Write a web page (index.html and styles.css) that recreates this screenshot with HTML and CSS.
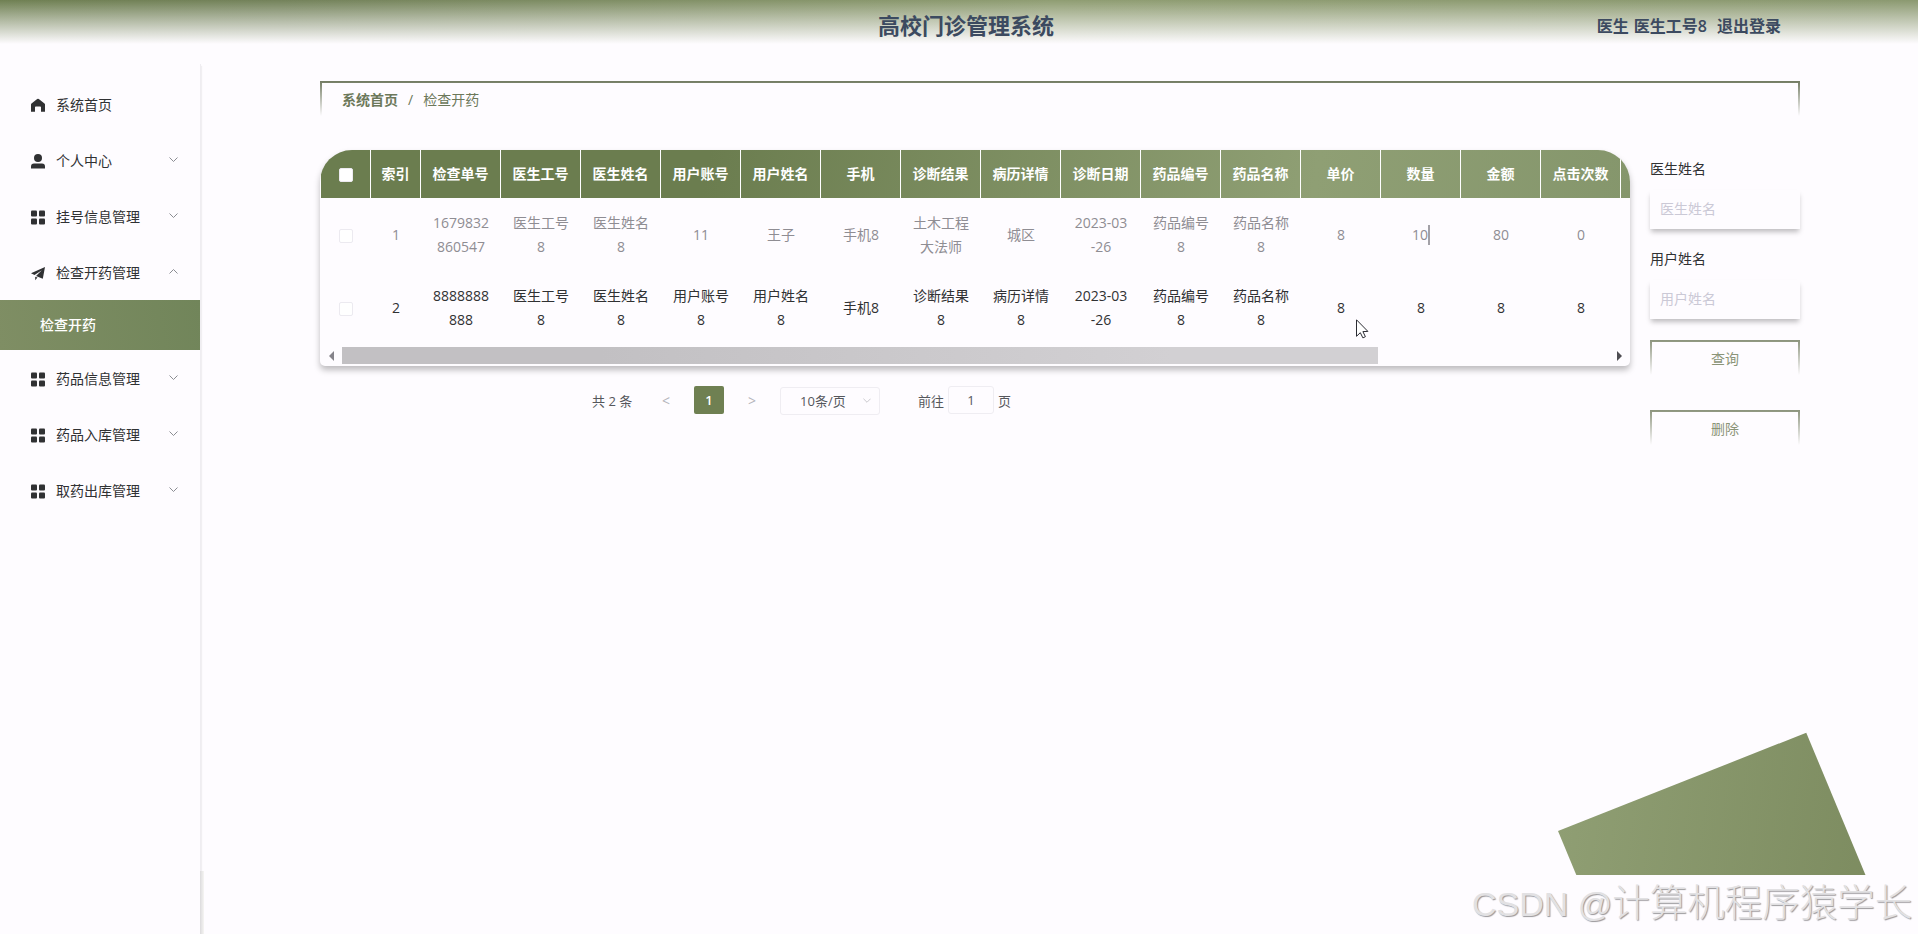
FILE: index.html
```html
<!DOCTYPE html>
<html lang="zh-CN">
<head>
    <meta charset="UTF-8">
    <meta name="viewport" content="width=device-width, initial-scale=1.0">
    <title>高校门诊管理系统</title>
    <link rel="stylesheet" href="styles.css">
</head>
<body>
    <svg class="symbols">
        <symbol id="icon-home" viewBox="0 0 14 14"><path d="M7 .2Q7.4.2 7.8.5L13.5 5q.5.5.5 1v7.2h-4V8.8Q10 8 9.2 8H4.8Q4 8 4 8.8v4.4H0V6q0-.6.5-1L6.200.5Q6.600.2 7 .2z"/></symbol>
        <symbol id="icon-user" viewBox="0 0 14 15"><circle cx="7" cy="4" r="4"/><path d="M0 14.600V12.500Q0 9.500 3 9.500h8q3 0 3 3v2.100z"/></symbol>
        <symbol id="icon-menu" viewBox="0 0 14 14"><rect width="6" height="6" rx="1"/><rect x="8" width="6" height="6" rx="1"/><rect y="8" width="6" height="6" rx="1"/><rect x="8" y="8" width="6" height="6" rx="1"/></symbol>
        <symbol id="icon-plane" viewBox="0 0 14 14"><path d="M14 .5L0 6.800l3.500 1.800L10.800 3.700 5 9.500l6.800 2.700zM4.200 10.200v3.500L6.500 11z"/></symbol>
        <symbol id="icon-down" viewBox="0 0 9 5"><path d="M.5.5l4 4 4-4" fill="none" stroke="#8b8d92"/></symbol>
    </svg>

    <header class="header">
        <h1 class="title">高校门诊管理系统</h1>
        <div class="user"><span>医生 医生工号8</span><span class="logout">退出登录</span></div>
    </header>

    <div class="container">
        <aside class="sidebar">
            <ul class="menu">
                <li class="menu-item"><svg class="icon"><use href="#icon-home"/></svg><span>系统首页</span></li>
                <li class="menu-item"><svg class="icon"><use href="#icon-user"/></svg><span>个人中心</span><svg class="arrow"><use href="#icon-down"/></svg></li>
                <li class="menu-item"><svg class="icon"><use href="#icon-menu"/></svg><span>挂号信息管理</span><svg class="arrow"><use href="#icon-down"/></svg></li>
                <li class="menu-item"><svg class="icon"><use href="#icon-plane"/></svg><span>检查开药管理</span><svg class="arrow arrow-up"><use href="#icon-down"/></svg></li>
                <li class="sub-item">检查开药</li>
                <li class="menu-item"><svg class="icon"><use href="#icon-menu"/></svg><span>药品信息管理</span><svg class="arrow"><use href="#icon-down"/></svg></li>
                <li class="menu-item"><svg class="icon"><use href="#icon-menu"/></svg><span>药品入库管理</span><svg class="arrow"><use href="#icon-down"/></svg></li>
                <li class="menu-item"><svg class="icon"><use href="#icon-menu"/></svg><span>取药出库管理</span><svg class="arrow"><use href="#icon-down"/></svg></li>
            </ul>
        </aside>

        <main class="main">
            <nav class="breadcrumb fade-border"><b>系统首页</b><span class="slash">/</span><span>检查开药</span></nav>

            <div class="content">
                <section class="list">
                    <div class="table-box">
                        <table class="table">
                            <colgroup>
                                <col class="col-small"><col class="col-small">
                                <col><col><col><col><col><col><col><col><col><col><col><col><col><col><col><col>
                            </colgroup>
                            <thead>
                                <tr>
                                    <th><span class="checkbox"></span></th>
                                    <th>索引</th>
                                    <th>检查单号</th>
                                    <th>医生工号</th>
                                    <th>医生姓名</th>
                                    <th>用户账号</th>
                                    <th>用户姓名</th>
                                    <th>手机</th>
                                    <th>诊断结果</th>
                                    <th>病历详情</th>
                                    <th>诊断日期</th>
                                    <th>药品编号</th>
                                    <th>药品名称</th>
                                    <th>单价</th>
                                    <th>数量</th>
                                    <th>金额</th>
                                    <th>点击次数</th>
                                    <th></th>
                                </tr>
                            </thead>
                            <tbody>
                                <tr class="hover">
                                    <td><span class="checkbox"></span></td>
                                    <td>1</td>
                                    <td>1679832<br>860547</td>
                                    <td>医生工号8</td>
                                    <td>医生姓名8</td>
                                    <td>11</td>
                                    <td>王子</td>
                                    <td>手机8</td>
                                    <td>土木工程大法师</td>
                                    <td>城区</td>
                                    <td>2023-03<br>-26</td>
                                    <td>药品编号8</td>
                                    <td>药品名称8</td>
                                    <td>8</td>
                                    <td><span class="caret">10</span></td>
                                    <td>80</td>
                                    <td>0</td>
                                    <td></td>
                                </tr>
                                <tr>
                                    <td><span class="checkbox"></span></td>
                                    <td>2</td>
                                    <td>8888888<br>888</td>
                                    <td>医生工号8</td>
                                    <td>医生姓名8</td>
                                    <td>用户账号8</td>
                                    <td>用户姓名8</td>
                                    <td>手机8</td>
                                    <td>诊断结果8</td>
                                    <td>病历详情8</td>
                                    <td>2023-03<br>-26</td>
                                    <td>药品编号8</td>
                                    <td>药品名称8</td>
                                    <td>8</td>
                                    <td>8</td>
                                    <td>8</td>
                                    <td>8</td>
                                    <td></td>
                                </tr>
                            </tbody>
                        </table>
                        <div class="scrollbar">
                            <span class="scroll-left"></span>
                            <span class="scroll-thumb"></span>
                            <span class="scroll-right"></span>
                        </div>
                    </div>

                    <div class="pagination">
                        <span class="total">共 2 条</span>
                        <span class="page-btn prev">&lt;</span>
                        <span class="page-num">1</span>
                        <span class="page-btn next">&gt;</span>
                        <span class="page-size">10条/页<svg class="select-arrow"><use href="#icon-down"/></svg></span>
                        <span>前往</span>
                        <span class="page-input">1</span>
                        <span>页</span>
                    </div>
                </section>

                <form class="search">
                    <label class="label">医生姓名</label>
                    <input class="input" type="text" placeholder="医生姓名">
                    <label class="label">用户姓名</label>
                    <input class="input" type="text" placeholder="用户姓名">
                    <button class="btn fade-border" type="button">查询</button>
                    <button class="btn fade-border" type="button">删除</button>
                </form>
            </div>
        </main>
    </div>

    <div class="corner"><div class="corner-block"></div></div>
    <svg class="cursor" viewBox="0 0 13 20"><path d="M.5.8v16.500l3.800-3.600 2.600 5.200 2.500-1.200-2.500-5.100 5-.2z" fill="#fff" stroke="#2b2b33"/></svg>
    <div class="watermark"><span class="latin">CSDN @</span>计算机程序猿学长</div>
</body>
</html>
```
FILE: styles.css
```css
* {
    margin: 0;
    padding: 0;
    box-sizing: border-box;
}

body {
    height: 934px;
    overflow: hidden;
    background: #fefcff;
    color: #303133;
    font-family: "Open Sans", "Noto Sans CJK SC", sans-serif;
    font-size: 14px;
    font-weight: 400;
}

.symbols {
    display: none;
}

.header {
    display: grid;
    grid-template-columns: 1fr auto 1fr;
    align-items: center;
    height: 64px;
    padding: 0 137px 14px 151px;
    background: linear-gradient(to bottom, transparent, #fefcff 44px), linear-gradient(80deg, #6f8052, #73825a 15%, #8f9d72 55%, #8b9970);
    color: #3c4a60;
}

.title {
    grid-column: 2;
    font-size: 22px;
    line-height: 50px;
}

.user {
    display: flex;
    justify-content: flex-end;
    gap: 10px;
    font-size: 16px;
    font-weight: 600;
    word-spacing: 1px;
}

.container {
    display: flex;
    height: 870px;
}

.sidebar {
    position: relative;
    width: 201px;
    padding-top: 13px;
    border-right: 1px solid #efedf1;
    box-shadow: 1px 2px 1px rgba(0, 0, 0, 0.05);
}

.sidebar::after {
    content: "";
    position: absolute;
    right: -4px;
    bottom: 0;
    width: 4px;
    height: 63px;
    background: linear-gradient(to right, #dcdbdd, #f6f5f3);
}

.menu {
    list-style: none;
}

.menu-item {
    display: flex;
    align-items: center;
    height: 56px;
    padding: 0 22px 0 31px;
}

.menu-item span {
    margin-top: -2px;
}

.icon {
    width: 14px;
    height: 15px;
    margin-right: 11px;
    fill: #303133;
}

.arrow {
    width: 9px;
    height: 5px;
    margin: 0 0 3px auto;
}

.arrow-up {
    transform: rotate(180deg);
}

.sub-item {
    height: 50px;
    margin: -1px 0 1px;
    padding-left: 40px;
    background: linear-gradient(80deg, #7f8e64, #71855a);
    color: #fff;
    font-weight: 500;
    line-height: 50px;
}

.main {
    width: 1480px;
    margin: 17px 0 0 119px;
}

.fade-border {
    border: 2px solid;
    border-bottom: 0;
    border-image: linear-gradient(to bottom, #737c63, transparent) 2 2 0 2;
}

.breadcrumb {
    display: flex;
    height: 35px;
    padding-left: 20px;
    color: #6c785a;
    line-height: 34px;
}

.slash {
    margin: 0 10px;
}

.content {
    display: flex;
    align-items: flex-start;
    gap: 20px;
    margin-top: 34px;
}

.list {
    width: 1310px;
}

.table-box {
    overflow: hidden;
    height: 216px;
    padding-left: 1px;
    border-radius: 32px 32px 5px 5px;
    box-shadow: 0 4px 6px rgba(0, 0, 0, 0.26);
}

.table {
    width: 1380px;
    table-layout: fixed;
    border-spacing: 0;
}

.table col {
    width: 80px;
}

.table .col-small {
    width: 50px;
}

.table thead {
    background: linear-gradient(100deg, #6b7d4f 28%, #8f9f74 72%, #85966c 95%);
}

.table th {
    height: 48px;
    padding-bottom: 2px;
    border-right: 1px solid #fff;
    color: #fff;
    font-weight: 700;
}

.table td {
    height: 73px;
    padding: 0 10px;
    line-height: 24px;
    text-align: center;
    word-break: break-all;
}

.table .hover td {
    color: #8f8d93;
}

.checkbox {
    display: inline-block;
    width: 14px;
    height: 14px;
    border: 1px solid #eceaf0;
    border-radius: 2px;
    background: #fff;
    vertical-align: middle;
}

.caret {
    padding-bottom: 1px;
    border-right: 2px solid #a3a1a7;
}

.scrollbar {
    display: flex;
    align-items: center;
    height: 17px;
    margin-top: 3px;
    padding: 0 8px;
}

.scroll-left,
.scroll-right {
    border: 5px solid transparent;
}

.scroll-left {
    border-left: 0;
    border-right: 5px solid #85838a;
}

.scroll-right {
    margin-left: auto;
    border-right: 0;
    border-left: 5px solid #4e4d52;
}

.scroll-thumb {
    width: 1036px;
    height: 17px;
    margin-left: 8px;
    background: linear-gradient(90deg, #c2c0c3 25%, #d2d0d3 80%);
}

.pagination {
    display: flex;
    align-items: center;
    height: 28px;
    margin: 20px 0 0 272px;
    color: #55575c;
    font-size: 13px;
}

.total {
    width: 42px;
    white-space: nowrap;
}

.page-btn {
    color: #b4b5bb;
    font-size: 14px;
}

.prev {
    margin-left: 28px;
}

.page-num {
    width: 30px;
    height: 28px;
    margin: 0 24px;
    border-radius: 2px;
    background: #6f8052;
    color: #fff;
    font-weight: 600;
    line-height: 28px;
    text-align: center;
}

.page-size {
    display: flex;
    align-items: center;
    width: 100px;
    height: 28px;
    margin: 1px 38px 0 24px;
    padding: 0 8px 0 19px;
    border: 1px solid #efedf2;
    border-radius: 3px;
}

.select-arrow {
    width: 8px;
    height: 5px;
    margin-left: auto;
    opacity: 0.5;
}

.page-input {
    width: 46px;
    height: 28px;
    margin: 0 4px;
    border: 1px solid #efedf2;
    border-radius: 3px;
    line-height: 26px;
    text-align: center;
}

.search {
    display: flex;
    flex-direction: column;
    width: 150px;
}

.label {
    height: 40px;
    line-height: 38px;
}

.input {
    height: 39px;
    margin-bottom: 11px;
    padding: 0 10px 2px;
    border: 0;
    background: #fefcff;
    box-shadow: 0 4px 5px -1px rgba(0, 0, 0, 0.25);
    font: inherit;
}

.input::placeholder {
    color: #cbc9d6;
}

.btn {
    height: 35px;
    margin: 10px 0 25px;
    padding-bottom: 2px;
    background: none;
    color: #8b9478;
    font: inherit;
}

.search .fade-border {
    border-image-source: linear-gradient(to bottom, #8c947d, transparent);
}

/* rotated block cut off by the bottom edge of its box */
.corner {
    position: absolute;
    top: 720px;
    left: 1540px;
    width: 360px;
    height: 155px;
    overflow: hidden;
}

.corner-block {
    width: 267px;
    height: 268px;
    margin: 111px 0 0 18px;
    background: linear-gradient(120deg, #8f9e73, #7a895d);
    transform: rotate(-21.600deg) skewX(1deg);
    transform-origin: 0 0;
}

.cursor {
    position: absolute;
    top: 319px;
    left: 1356px;
    width: 13px;
    height: 20px;
}

.watermark {
    position: absolute;
    top: 873px;
    left: 1472px;
    color: #e2e1e3;
    font-family: "Liberation Sans", "Noto Sans CJK SC", sans-serif;
    font-size: 37.500px;
    font-weight: 300;
    line-height: 60px;
    text-shadow: 1px 1px 1px #99979b;
    white-space: nowrap;
}

.latin {
    font-size: 34px;
}
```
